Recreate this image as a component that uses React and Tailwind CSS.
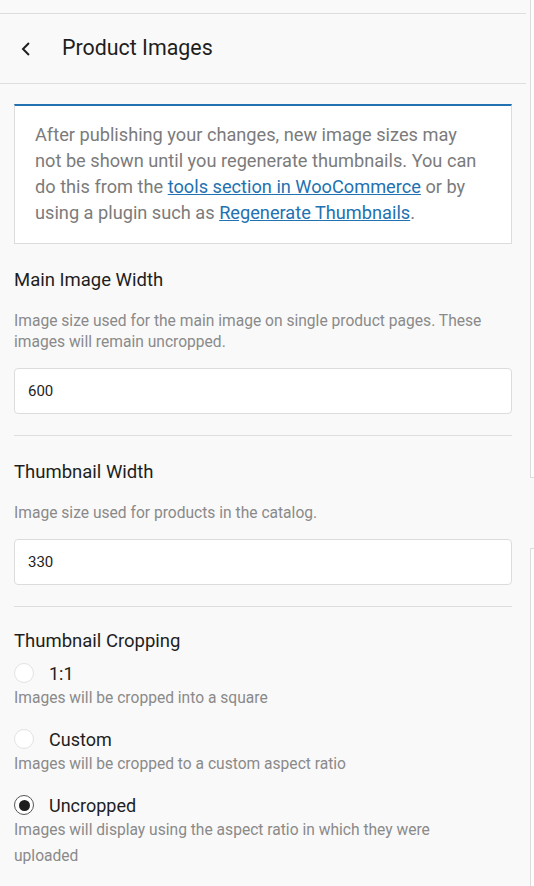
import React, { useState } from 'react';

const options = [
  { id: '1:1', label: '1:1', desc: 'Images will be cropped into a square' },
  { id: 'custom', label: 'Custom', desc: 'Images will be cropped to a custom aspect ratio' },
  { id: 'uncropped', label: 'Uncropped', desc: 'Images will display using the aspect ratio in which they were uploaded' },
];

function Field({ title, desc, value }) {
  return (
    <div className="px-[14px]">
      <h3 className="text-[18.5px] leading-[24px] text-[#1e1e1e]">{title}</h3>
      <p className="mt-[19px] text-[15.6px] leading-[21px] text-[#8a8a8a]">{desc}</p>
      <input
        defaultValue={value}
        className="mt-[15px] block w-full h-[46px] rounded-[4px] border border-[#dcdcdc] bg-white px-[13px] text-[15px] text-[#1e1e1e] outline-none"
      />
    </div>
  );
}

export default function App() {
  const [crop, setCrop] = useState('uncropped');

  return (
    <div className="flex min-h-[886px] bg-[#f9f9f9]" style={{ fontFamily: 'Roboto, "Noto Sans", Arial, sans-serif' }}>
      <div className="w-[526px] shrink-0">
        {/* Header */}
        <div className="mt-[13px] border-t border-b border-[#dedede] h-[71px] flex items-center">
          <button className="ml-[17px] w-[18px] h-[18px] flex items-center justify-center text-[#1e1e1e]">
            <svg width="18" height="18" viewBox="0 0 24 24" fill="none" stroke="currentColor" strokeWidth="2.6" strokeLinecap="square">
              <path d="M15 5l-7 7 7 7" />
            </svg>
          </button>
          <h1 className="ml-[27px] text-[21.4px] leading-[28px] text-[#1e1e1e] -mt-[1px]">Product Images</h1>
        </div>

        {/* Notice */}
        <div className="mx-[14px] mt-[20px] border border-[#dcdcdc] border-t-2 border-t-[#2271b1] bg-white pl-[20px] pr-[24px] pt-[16px] pb-[17px]">
          <p className="text-[18.2px] leading-[26px] text-[#7b7b7b]">
            After publishing your changes, new image sizes may not be shown until you regenerate thumbnails. You can do this from the{' '}
            <a href="#" className="text-[#2271b1] underline">tools section in WooCommerce</a> or by using a plugin such as{' '}
            <a href="#" className="text-[#2271b1] underline">Regenerate Thumbnails</a>.
          </p>
        </div>

        <div className="mt-[24px]">
          <Field
            title="Main Image Width"
            desc="Image size used for the main image on single product pages. These images will remain uncropped."
            value="600"
          />
          <div className="mx-[14px] mt-[21px] border-t border-[#dedede]" />
          <div className="mt-[24px]">
            <Field title="Thumbnail Width" desc="Image size used for products in the catalog." value="330" />
          </div>
          <div className="mx-[14px] mt-[21px] border-t border-[#dedede]" />

          <div className="px-[14px] mt-[22px]">
            <h3 className="text-[18.5px] leading-[24px] text-[#1e1e1e]">Thumbnail Cropping</h3>
            <div className="mt-[8px] flex flex-col gap-[16px]">
              {options.map((o) => (
                <label key={o.id} className="block cursor-pointer" onClick={() => setCrop(o.id)}>
                  <div className="flex items-center h-[24px]">
                    <span
                      className={`w-[20px] h-[20px] rounded-full bg-white flex items-center justify-center border ${
                        crop === o.id ? 'border-[#555]' : 'border-[#e2e2e2]'
                      }`}
                    >
                      {crop === o.id && <span className="w-[11px] h-[11px] rounded-full bg-[#1e1e1e]" />}
                    </span>
                    <span className="ml-[15px] text-[18px] text-[#1e1e1e]">{o.label}</span>
                  </div>
                  <p className="text-[15.6px] leading-[26px] text-[#8a8a8a] pr-[40px]">{o.desc}</p>
                </label>
              ))}
            </div>
          </div>
        </div>
      </div>

      {/* Right edge of preview */}
      <div className="ml-[4px] flex-1 flex flex-col">
        <div className="h-[478px] border-l border-b border-[#dcdcdc] bg-[#fdfdfd]" />
        <div className="mt-[70px] flex-1 border-l border-t border-[#dcdcdc] bg-[#fdfdfd]" />
      </div>
    </div>
  );
}
